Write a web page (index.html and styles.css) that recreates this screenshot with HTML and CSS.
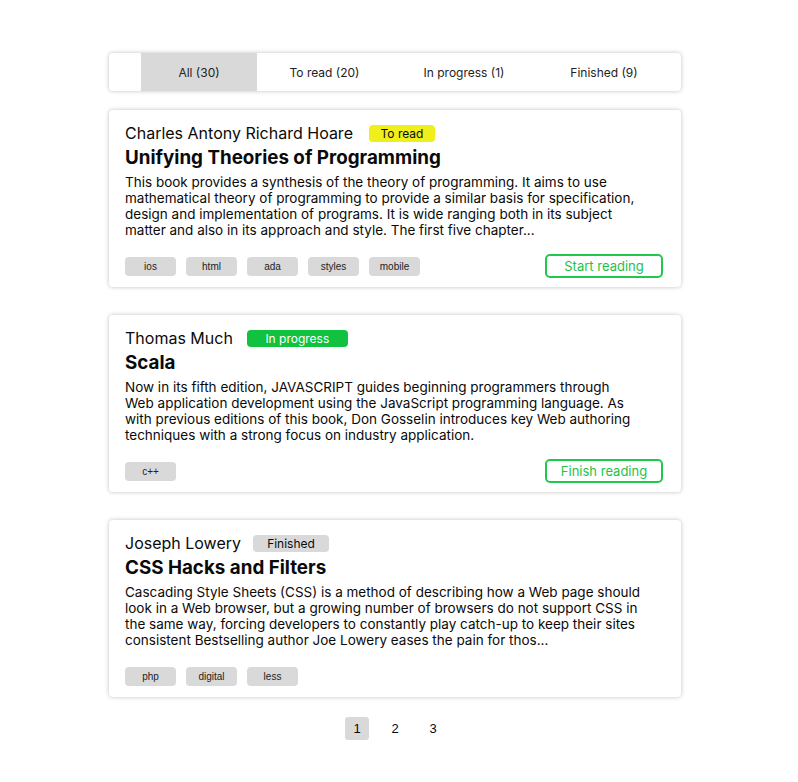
FILE: index.html
```html
<!DOCTYPE html>
<html>
  <head>
    <title>Books</title>
    <link rel="stylesheet" href="styles.css">
  </head>
  <body>
    <div class="container">
      <nav class="tabs">
        <a class="tab tab-all active">All (30)</a>
        <a class="tab tab-toread">To read (20)</a>
        <a class="tab tab-progress">In progress (1)</a>
        <a class="tab tab-finished">Finished (9)</a>
      </nav>

      <div class="card">
        <div class="card-head">
          <span class="author">Charles Antony Richard Hoare</span>
          <span class="status status-toread">To read</span>
        </div>
        <h2 class="title">Unifying Theories of Programming</h2>
        <p class="description">This book provides a synthesis of the theory of programming. It aims to use mathematical theory of programming to provide a similar basis for specification, design and implementation of programs. It is wide ranging both in its subject matter and also in its approach and style. The first five chapter...</p>
        <div class="card-foot">
          <div class="tags">
            <span class="tag">ios</span>
            <span class="tag">html</span>
            <span class="tag">ada</span>
            <span class="tag">styles</span>
            <span class="tag">mobile</span>
          </div>
          <button class="action">Start reading</button>
        </div>
      </div>

      <div class="card">
        <div class="card-head">
          <span class="author">Thomas Much</span>
          <span class="status status-progress">In progress</span>
        </div>
        <h2 class="title">Scala</h2>
        <p class="description">Now in its fifth edition, JAVASCRIPT guides beginning programmers through Web application development using the JavaScript programming language. As with previous editions of this book, Don Gosselin introduces key Web authoring techniques with a strong focus on industry application.</p>
        <div class="card-foot">
          <div class="tags">
            <span class="tag">c++</span>
          </div>
          <button class="action">Finish reading</button>
        </div>
      </div>

      <div class="card">
        <div class="card-head">
          <span class="author">Joseph Lowery</span>
          <span class="status status-finished">Finished</span>
        </div>
        <h2 class="title">CSS Hacks and Filters</h2>
        <p class="description">Cascading Style Sheets (CSS) is a method of describing how a Web page should look in a Web browser, but a growing number of browsers do not support CSS in the same way, forcing developers to constantly play catch-up to keep their sites consistent Bestselling author Joe Lowery eases the pain for thos...</p>
        <div class="card-foot">
          <div class="tags">
            <span class="tag">php</span>
            <span class="tag">digital</span>
            <span class="tag">less</span>
          </div>
        </div>
      </div>

      <div class="pages">
        <a class="page active">1</a>
        <a class="page">2</a>
        <a class="page">3</a>
      </div>
    </div>
  </body>
</html>
```

FILE: styles.css
```css
* {
  box-sizing: border-box;
}

body {
  font-family: Inter, "Noto Sans", sans-serif;
  color: #0a0a0a;
  margin: 0;
  padding: 0;
  background: #fff;
}

.container {
  width: 572px;
  margin-left: 109px;
  padding-top: 53px;
}

.tabs {
  display: flex;
  height: 38px;
  padding-left: 32px;
  background: #fff;
  border-radius: 4px;
  box-shadow: 0 0 4px rgba(0, 0, 0, 0.25);
  overflow: hidden;
  margin-bottom: 19px;
}

.tab {
  display: flex;
  align-items: center;
  justify-content: center;
  font-size: 12px;
  color: #222;
  cursor: pointer;
}

.tab-all { width: 116px; }
.tab-toread { width: 135px; }
.tab-progress { width: 144px; }
.tab-finished { width: 136px; }

.tab.active {
  background: #d9d9d9;
}

.card {
  background: #fff;
  border-radius: 4px;
  box-shadow: 0 0 4px rgba(0, 0, 0, 0.25);
  padding: 13px 18px 9px 16px;
  margin-bottom: 28px;
}

.card-head {
  display: flex;
  align-items: center;
  height: 20px;
}

.author {
  font-size: 16px;
}

.status {
  margin-left: 16px;
  height: 17px;
  line-height: 17px;
  border-radius: 4px;
  font-size: 12px;
  text-align: center;
}

.status-toread {
  background: #efef1c;
  width: 66px;
}

.status-progress {
  background: #10c23f;
  color: #fff;
  width: 101px;
  margin-left: 14px;
}

.status-finished {
  background: #d9d9d9;
  width: 76px;
  margin-left: 12px;
}

.title {
  font-size: 18.8px;
  font-weight: 700;
  line-height: 24px;
  margin: 3px 0 0;
}

.description {
  font-size: 13.5px;
  line-height: 16px;
  margin: 4px 0 0;
  max-width: 515.5px;
}

.card-foot {
  display: flex;
  align-items: center;
  justify-content: space-between;
  min-height: 24px;
  margin-top: 16px;
}

.tags {
  display: flex;
  gap: 10px;
}

.tag {
  width: 51px;
  height: 19px;
  line-height: 19px;
  text-align: center;
  background: #d9d9d9;
  border-radius: 4px;
  font-family: "Liberation Sans", Arial, sans-serif;
  font-size: 10px;
  color: #222;
}

.action {
  width: 118px;
  height: 24px;
  background: #fff;
  border: 2px solid #22c84c;
  border-radius: 5px;
  color: #1fc248;
  font-family: Inter, "Noto Sans", sans-serif;
  font-size: 13px;
  cursor: pointer;
}

.pages {
  display: flex;
  justify-content: center;
  gap: 14px;
  margin-top: -8px;
}

.page {
  width: 24px;
  height: 23px;
  line-height: 23px;
  text-align: center;
  border-radius: 3px;
  font-family: "Liberation Sans", Arial, sans-serif;
  font-size: 13px;
  cursor: pointer;
}

.page.active {
  background: #d9d9d9;
}
```
